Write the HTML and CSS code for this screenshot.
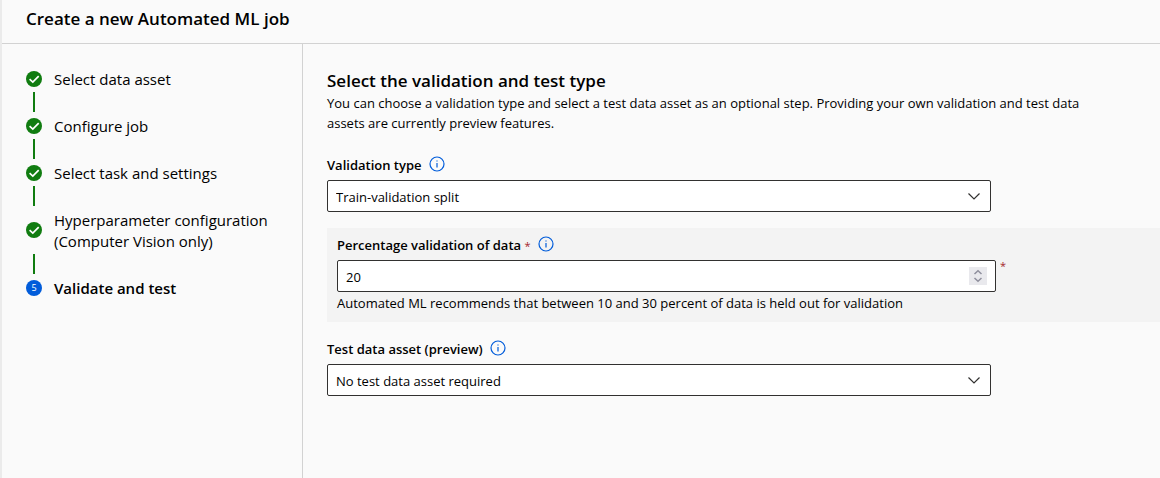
FILE: index.html
```html
<!DOCTYPE html>
<html lang="en">
<head>
<meta charset="utf-8">
<title>Create a new Automated ML job</title>
<link rel="stylesheet" href="styles.css">
</head>
<body class="page">
<header class="header">
  <h1 class="header-title">Create a new Automated ML job</h1>
</header>
<div class="body">
  <nav class="sidebar" aria-label="Steps">
    <ol class="steps">
      <li class="step"><div class="step-row"><svg class="step-icon" viewBox="0 0 16 16" aria-hidden="true"><circle class="done" cx="8" cy="8" r="8"/><path class="tick" d="M3.6 8.2 6.8 11.1 12.7 5.2"/></svg><span>Select data asset</span></div></li>
      <li class="step"><div class="step-row"><svg class="step-icon" viewBox="0 0 16 16" aria-hidden="true"><circle class="done" cx="8" cy="8" r="8"/><path class="tick" d="M3.6 8.2 6.8 11.1 12.7 5.2"/></svg><span>Configure job</span></div></li>
      <li class="step"><div class="step-row"><svg class="step-icon" viewBox="0 0 16 16" aria-hidden="true"><circle class="done" cx="8" cy="8" r="8"/><path class="tick" d="M3.6 8.2 6.8 11.1 12.7 5.2"/></svg><span>Select task and settings</span></div></li>
      <li class="step"><div class="step-row"><svg class="step-icon" viewBox="0 0 16 16" aria-hidden="true"><circle class="done" cx="8" cy="8" r="8"/><path class="tick" d="M3.6 8.2 6.8 11.1 12.7 5.2"/></svg><span>Hyperparameter configuration<br>(Computer Vision only)</span></div></li>
      <li class="step current" aria-current="step"><div class="step-row"><span class="step-number">5</span><span>Validate and test</span></div></li>
    </ol>
  </nav>
  <main class="main">
    <h2 class="title">Select the validation and test type</h2>
    <p class="intro">You can choose a validation type and select a test data asset as an optional step. Providing your own validation and test data assets are currently preview features.</p>

    <div class="field">
      <div class="label-row">
        <label class="label" for="validation-type">Validation type</label>
        <button class="info" type="button" aria-label="About validation type"><svg class="info-icon" viewBox="0 0 16 16"><circle cx="8" cy="8" r="7"/><path d="M8 7v4.5M8 4.5v1"/></svg></button>
      </div>
      <div class="control">
        <select class="input" id="validation-type"><option>Train-validation split</option></select>
        <svg class="chevron" viewBox="0 0 12 7" aria-hidden="true"><path d="M.5.5 6 6 11.5.5"/></svg>
      </div>
    </div>

    <section class="panel">
      <div class="label-row">
        <label class="label" for="percentage">Percentage validation of data <span class="required">*</span></label>
        <button class="info" type="button" aria-label="About percentage validation"><svg class="info-icon" viewBox="0 0 16 16"><circle cx="8" cy="8" r="7"/><path d="M8 7v4.5M8 4.5v1"/></svg></button>
      </div>
      <div class="number-row">
        <div class="control">
          <input class="input" id="percentage" type="number" value="20" min="0" max="100" required>
          <svg class="spinner" viewBox="0 0 18 18" aria-hidden="true"><path d="M5.5 7 9 3.7 12.5 7M5.5 11 9 14.3 12.5 11"/></svg>
        </div>
        <span class="required">*</span>
      </div>
      <p class="hint">Automated ML recommends that between 10 and 30 percent of data is held out for validation</p>
    </section>

    <div class="field">
      <div class="label-row">
        <label class="label" for="test-asset">Test data asset (preview)</label>
        <button class="info" type="button" aria-label="About test data asset"><svg class="info-icon" viewBox="0 0 16 16"><circle cx="8" cy="8" r="7"/><path d="M8 7v4.5M8 4.5v1"/></svg></button>
      </div>
      <div class="control">
        <select class="input" id="test-asset"><option>No test data asset required</option></select>
        <svg class="chevron" viewBox="0 0 12 7" aria-hidden="true"><path d="M.5.5 6 6 11.5.5"/></svg>
      </div>
    </div>
  </main>
</div>
</body>
</html>
```
FILE: styles.css
```css
* { box-sizing: border-box; }

.page {
  display: flex;
  flex-direction: column;
  min-height: 100vh;
  margin: 0;
  border-left: 2px solid #ebebeb;
  background: #fafafa;
  color: #000;
  font: 13px/20px "Segoe UI", "Open Sans", "Noto Sans", sans-serif;
}

.header {
  padding: 7px 24px 12px;
  border-bottom: 1px solid #d2d2d2;
}

.header-title,
.title {
  margin: 0;
  font-size: 17px;
  font-weight: 600;
  line-height: 24px;
}

.body {
  display: flex;
  flex: 1;
}

.sidebar {
  flex: 0 0 301px;
  padding: 25px 16px 24px 24px;
  border-right: 1px solid #d2d2d2;
  font-size: 15px;
  line-height: 21px;
}

.steps {
  margin: 0;
  padding: 0;
  list-style: none;
}

.step-row {
  display: flex;
  align-items: center;
  gap: 12px;
}

.step:not(:last-child)::after {
  content: "";
  display: block;
  width: 2px;
  height: 20px;
  margin: 2px 7px 4px;
  background: #107c10;
}

.current { font-weight: 600; }

.step-icon,
.step-number {
  flex: none;
  width: 16px;
  height: 16px;
  margin-bottom: 2px;
}

.done { fill: #107c10; }

.tick {
  fill: none;
  stroke: #fff;
  stroke-width: 1.7;
}

.step-number {
  border-radius: 50%;
  background: #015cda;
  color: #fff;
  font-size: 9px;
  font-weight: 400;
  line-height: 16px;
  text-align: center;
}

.main {
  flex: 1;
  min-width: 0;
  padding: 25px 0 24px 24px;
}

.intro {
  max-width: 780px;
  margin: 0 0 22px;
}

.field { max-width: 664px; }

.label-row {
  display: flex;
  align-items: center;
  gap: 7px;
  margin-bottom: 5px;
}

.label { font-weight: 600; }

.required {
  color: #a4262c;
  font-size: 11px;
  font-weight: 400;
  line-height: 12px;
}

.info {
  display: flex;
  padding: 0 0 3px;
  border: 0;
  background: none;
}

.info-icon {
  width: 16px;
  height: 16px;
  fill: none;
  stroke: #015cda;
  stroke-width: 1.2;
}

.control {
  position: relative;
  flex: 1;
}

.input {
  display: block;
  width: 100%;
  height: 32px;
  padding: 2px 32px 0 8px;
  border: 1px solid #323130;
  border-radius: 2px;
  background: #fff;
  color: #000;
  font: inherit;
  appearance: none;
}

.input[type="number"] { appearance: textfield; }

.input::-webkit-inner-spin-button { display: none; }

.chevron {
  position: absolute;
  top: 13px;
  right: 11px;
  width: 12px;
  height: 7px;
  fill: none;
  stroke: #323130;
  stroke-width: 1.2;
  pointer-events: none;
}

.spinner {
  position: absolute;
  top: 7px;
  right: 9px;
  width: 18px;
  height: 18px;
  background: #e9e9ed;
  fill: none;
  stroke: #8f8f9d;
  stroke-width: 1.5;
  pointer-events: none;
}

.panel {
  margin: 16px 0 17px;
  padding: 7px 10px 9px;
  background: #f3f3f3;
}

.number-row {
  display: flex;
  gap: 4px;
  max-width: 669px;
}

.hint { margin: 1px 0 0; }
```
